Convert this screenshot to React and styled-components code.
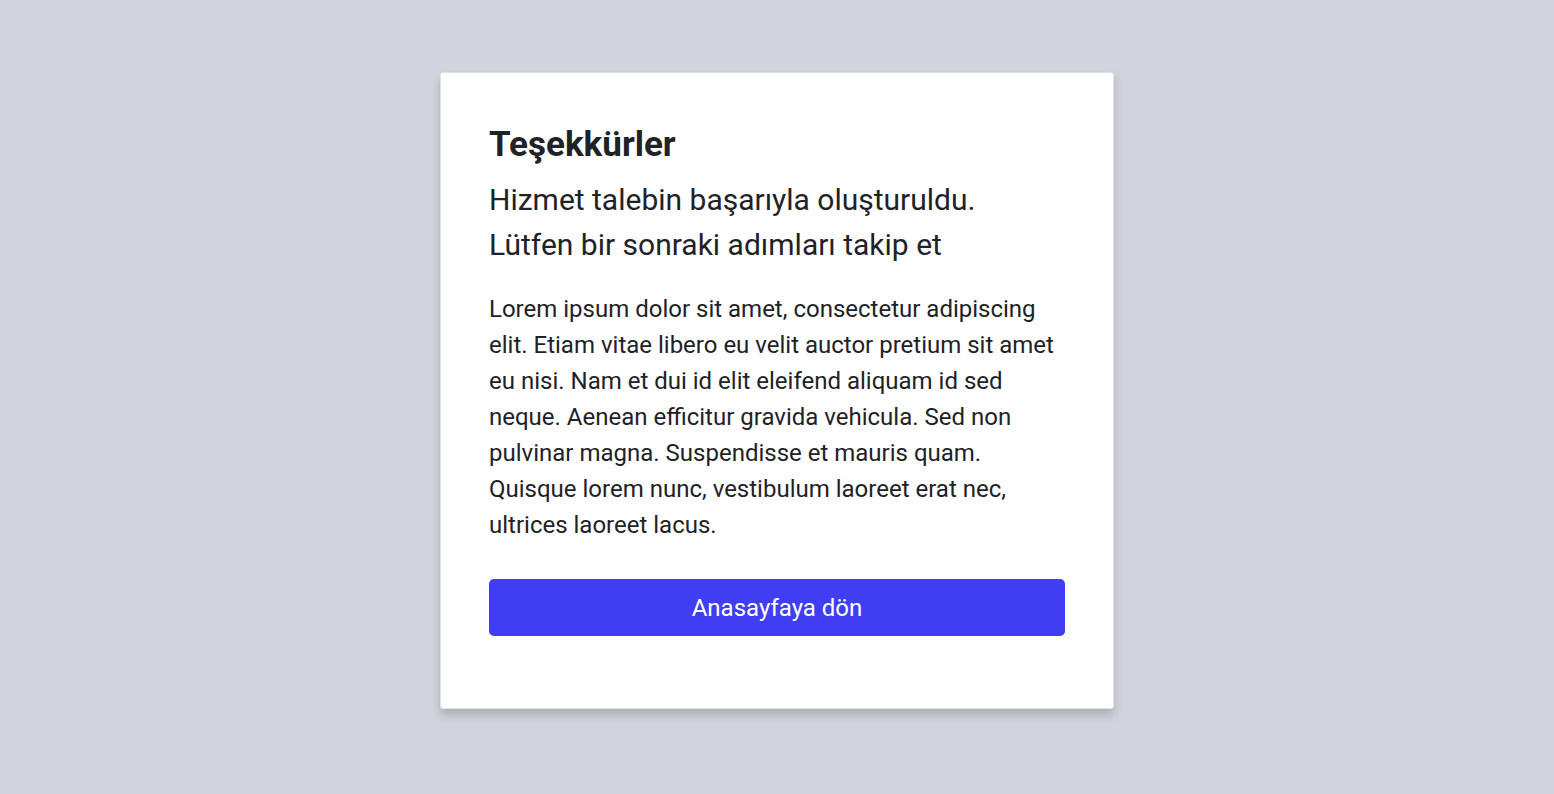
import React from 'react';
import styled, { createGlobalStyle } from 'styled-components';

const GlobalStyle = createGlobalStyle`
    html, body {
        margin: 0;
        padding: 0;
        background: #d1d5db;
        font-family: Roboto, "Noto Sans", Arial, sans-serif;
    }
`;

export const Page = styled.main`
    min-height: 794px;
    display: flex;
    justify-content: center;
    align-items: flex-start;
    padding-top: 72px;
    box-sizing: border-box;
`;

export const Card = styled.section`
    width: 674px;
    box-sizing: border-box;
    background: #ffffff;
    border: 1px solid #e2e4e8;
    border-radius: 3px;
    box-shadow: 0 6px 10px rgba(0, 0, 0, 0.18);
    padding: 50px 48px 72px;
    color: #1f2226;
`;

export const Title = styled.h1`
    margin: 0;
    font-size: 35px;
    font-weight: 700;
    line-height: 44px;
`;

export const Subtitle = styled.h2`
    margin: 10px 0 0;
    font-size: 30px;
    font-weight: 400;
    line-height: 45px;
`;

export const Body = styled.p`
    margin: 24px 0 0;
    font-size: 24px;
    line-height: 36px;
`;

export const Button = styled.button`
    display: block;
    width: 100%;
    height: 57px;
    margin-top: 36px;
    border: none;
    border-radius: 5px;
    background: #403df3;
    color: #ffffff;
    font-family: inherit;
    font-size: 24px;
    cursor: pointer;
`;

const App = () => (
    <>
        <GlobalStyle />
        <Page>
            <Card>
                <Title>Teşekkürler</Title>
                <Subtitle>
                    Hizmet talebin başarıyla oluşturuldu.
                    <br />
                    Lütfen bir sonraki adımları takip et
                </Subtitle>
                <Body>
                    Lorem ipsum dolor sit amet, consectetur adipiscing elit. Etiam vitae libero eu
                    velit auctor pretium sit amet eu nisi. Nam et dui id elit eleifend aliquam id sed
                    neque. Aenean efficitur gravida vehicula. Sed non pulvinar magna. Suspendisse et
                    mauris quam. Quisque lorem nunc, vestibulum laoreet erat nec, ultrices laoreet lacus.
                </Body>
                <Button>Anasayfaya dön</Button>
            </Card>
        </Page>
    </>
);

export default App;
